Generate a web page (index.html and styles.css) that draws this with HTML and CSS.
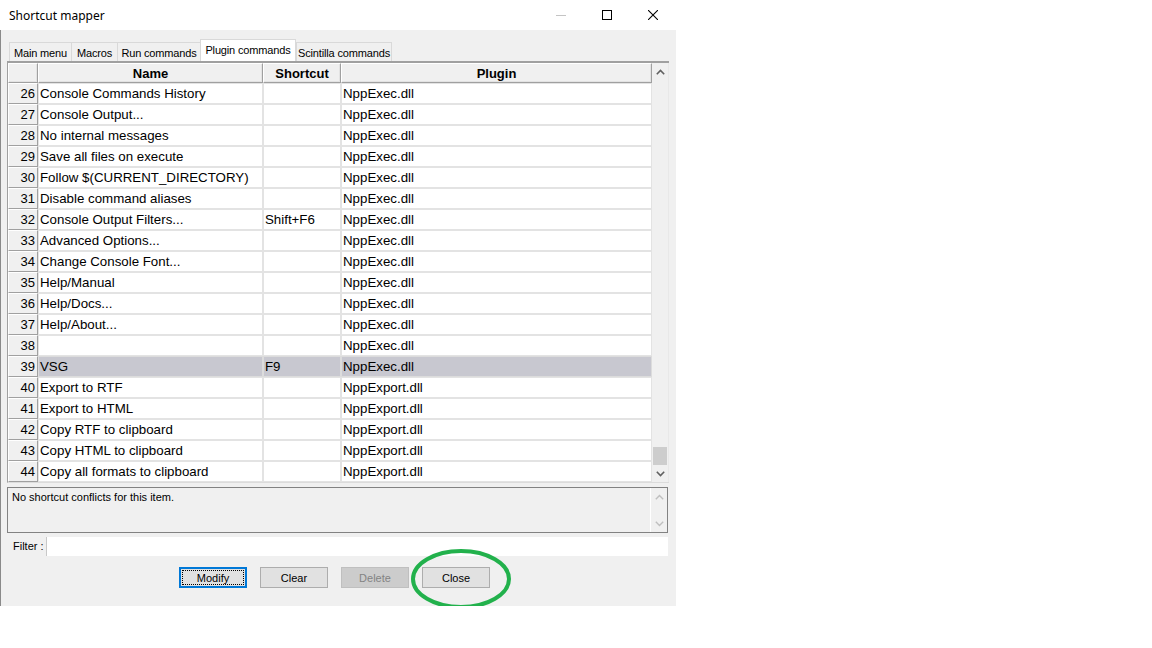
FILE: index.html
```html
<!DOCTYPE html>
<html>
<head>
<meta charset="utf-8">
<title>Shortcut mapper</title>
<link rel="stylesheet" href="styles.css">
</head>
<body>
<div class="window">
  <div class="titlebar">
    <span class="title">Shortcut mapper</span>
    <div class="controls">
      <span class="ctl ctl-min"><svg width="10" height="10" viewBox="0 0 10 10"><line x1="0" y1="5.5" x2="10" y2="5.5" stroke="#c4c4c4" stroke-width="1"/></svg></span>
      <span class="ctl ctl-max"><svg width="10" height="10" viewBox="0 0 10 10"><rect x="0.5" y="0.5" width="9" height="9" fill="none" stroke="#000" stroke-width="1"/></svg></span>
      <span class="ctl ctl-close"><svg width="10" height="10" viewBox="0 0 10 10"><path d="M0 0L10 10M10 0L0 10" stroke="#000" stroke-width="1.1"/></svg></span>
    </div>
  </div>
  <div class="client">
    <div class="tabs">
      <div class="tab t1">Main menu</div>
      <div class="tab t2">Macros</div>
      <div class="tab t3">Run commands</div>
      <div class="tab t4 active">Plugin commands</div>
      <div class="tab t5">Scintilla commands</div>
    </div>
    <div class="grid">
      <div class="grid-main">
        <div class="row head">
          <div class="hc corner"></div>
          <div class="hc">Name</div>
          <div class="hc">Shortcut</div>
          <div class="hc">Plugin</div>
        </div>
        <div class="row"><div class="num">26</div><div class="c">Console Commands History</div><div class="c"></div><div class="c">NppExec.dll</div></div>
        <div class="row"><div class="num">27</div><div class="c">Console Output...</div><div class="c"></div><div class="c">NppExec.dll</div></div>
        <div class="row"><div class="num">28</div><div class="c">No internal messages</div><div class="c"></div><div class="c">NppExec.dll</div></div>
        <div class="row"><div class="num">29</div><div class="c">Save all files on execute</div><div class="c"></div><div class="c">NppExec.dll</div></div>
        <div class="row"><div class="num">30</div><div class="c">Follow $(CURRENT_DIRECTORY)</div><div class="c"></div><div class="c">NppExec.dll</div></div>
        <div class="row"><div class="num">31</div><div class="c">Disable command aliases</div><div class="c"></div><div class="c">NppExec.dll</div></div>
        <div class="row"><div class="num">32</div><div class="c">Console Output Filters...</div><div class="c">Shift+F6</div><div class="c">NppExec.dll</div></div>
        <div class="row"><div class="num">33</div><div class="c">Advanced Options...</div><div class="c"></div><div class="c">NppExec.dll</div></div>
        <div class="row"><div class="num">34</div><div class="c">Change Console Font...</div><div class="c"></div><div class="c">NppExec.dll</div></div>
        <div class="row"><div class="num">35</div><div class="c">Help/Manual</div><div class="c"></div><div class="c">NppExec.dll</div></div>
        <div class="row"><div class="num">36</div><div class="c">Help/Docs...</div><div class="c"></div><div class="c">NppExec.dll</div></div>
        <div class="row"><div class="num">37</div><div class="c">Help/About...</div><div class="c"></div><div class="c">NppExec.dll</div></div>
        <div class="row"><div class="num">38</div><div class="c"></div><div class="c"></div><div class="c">NppExec.dll</div></div>
        <div class="row sel"><div class="num">39</div><div class="c">VSG</div><div class="c">F9</div><div class="c">NppExec.dll</div></div>
        <div class="row"><div class="num">40</div><div class="c">Export to RTF</div><div class="c"></div><div class="c">NppExport.dll</div></div>
        <div class="row"><div class="num">41</div><div class="c">Export to HTML</div><div class="c"></div><div class="c">NppExport.dll</div></div>
        <div class="row"><div class="num">42</div><div class="c">Copy RTF to clipboard</div><div class="c"></div><div class="c">NppExport.dll</div></div>
        <div class="row"><div class="num">43</div><div class="c">Copy HTML to clipboard</div><div class="c"></div><div class="c">NppExport.dll</div></div>
        <div class="row"><div class="num">44</div><div class="c">Copy all formats to clipboard</div><div class="c"></div><div class="c">NppExport.dll</div></div>
      </div>
      <div class="vscroll">
        <div class="arrow"><svg width="9" height="6" viewBox="0 0 9 6"><path d="M0.8 5.2L4.5 1.5L8.2 5.2" fill="none" stroke="#606060" stroke-width="1.6"/></svg></div>
        <div class="track"><div class="thumb"></div></div>
        <div class="arrow"><svg width="9" height="6" viewBox="0 0 9 6"><path d="M0.8 0.8L4.5 4.5L8.2 0.8" fill="none" stroke="#606060" stroke-width="1.6"/></svg></div>
      </div>
    </div>
    <div class="conflicts">
      <div class="conf-text">No shortcut conflicts for this item.</div>
      <div class="vscroll small">
        <div class="arrow"><svg width="9" height="6" viewBox="0 0 9 6"><path d="M0.8 5.2L4.5 1.5L8.2 5.2" fill="none" stroke="#bfbfbf" stroke-width="1.4"/></svg></div>
        <div class="track"></div>
        <div class="arrow"><svg width="9" height="6" viewBox="0 0 9 6"><path d="M0.8 0.8L4.5 4.5L8.2 0.8" fill="none" stroke="#bfbfbf" stroke-width="1.4"/></svg></div>
      </div>
    </div>
    <div class="filter">
      <span class="flabel">Filter :</span>
      <div class="finput"></div>
    </div>
    <div class="buttons">
      <div class="btn focus"><span>Modify</span></div>
      <div class="btn">Clear</div>
      <div class="btn disabled">Delete</div>
      <div class="btn">Close</div>
    </div>
    <svg class="annot" width="106" height="64" viewBox="0 0 106 64"><ellipse cx="53" cy="32" rx="48" ry="28" fill="none" stroke="#22b14c" stroke-width="4"/></svg>
  </div>
</div>
</body>
</html>
```

FILE: styles.css
```css
* { box-sizing: border-box; }
html, body { margin: 0; padding: 0; background: #ffffff; }
body { font-family: "Liberation Sans", Arial, sans-serif; }

.window { width: 676px; height: 606px; display: flex; flex-direction: column; }

.titlebar {
  height: 30px; background: #ffffff; display: flex; align-items: center;
  justify-content: space-between; flex: none;
}
.title { font-family: "Noto Sans", "Open Sans", sans-serif; font-size: 12px; color: #000; padding-left: 9px; }
.controls { display: flex; height: 30px; }
.ctl { width: 46px; height: 30px; display: flex; align-items: center; justify-content: center; }

.client {
  position: relative; flex: 1; background: #f0f0f0;
  border-left: 1px solid #8a8a8a; font-size: 11px;
}

.tabs { display: flex; align-items: flex-end; height: 31px; padding-left: 8px; padding-top: 9px; }
.tab {
  height: 19px; border: 1px solid #d9d9d9; border-bottom: none; border-right: none;
  background: #f0f0f0; display: flex; align-items: center; justify-content: center;
  font-size: 11px; color: #000; padding-top: 1px; white-space: nowrap; letter-spacing: -0.15px;
}
.tab.t1 { width: 62px; }
.tab.t2 { width: 46px; }
.tab.t3 { width: 83px; }
.tab.t4 { width: 96px; }
.tab.t5 { width: 96px; border-right: 1px solid #d9d9d9; }
.tab.active { height: 22px; background: #ffffff; border: 1px solid #d9d9d9; border-bottom: none; padding-bottom: 3px; }

.grid {
  margin-left: 6px; width: 662px; height: 422px; display: flex;
  border-top: 2px solid #a0a0a0; border-left: 1px solid #a0a0a0; border-bottom: 1px solid #dcdcdc;
}
.grid-main { width: 644px; background: #ffffff; }
.row { display: grid; grid-template-columns: 30px 225px 78px 311px; height: 21px; }
.row.head { height: 20px; }
.hc {
  background: #f0f0f0; border: 1px solid #a0a0a0; border-top-color: #ffffff; border-left-color: #ffffff;
  box-shadow: inset -1px -1px 0 #e3e3e3;
  font-weight: bold; font-size: 13px; display: flex; align-items: center; justify-content: center; color: #000;
}
.num {
  background: #f0f0f0; border: 1px solid #a0a0a0; border-top-color: #ffffff; border-left-color: #ffffff;
  font-size: 13px; text-align: right; padding-right: 2px; line-height: 19px; color: #000;
}
.c {
  border: 1px solid #e3e3e3; font-size: 13.3px; line-height: 19px; padding-left: 1px;
  white-space: nowrap; overflow: hidden; color: #000;
}
.row.sel .c { background: #c8c8d0; border-color: #dcdcdc; }

.vscroll { width: 17px; background: #f0f0f0; display: flex; flex-direction: column; border-right: 1px solid #e8e8e8; }
.vscroll .arrow { height: 17px; display: flex; align-items: center; justify-content: center; flex: none; }
.vscroll .track { flex: 1; display: flex; flex-direction: column; justify-content: flex-end; }
.thumb { height: 18px; background: #cdcdcd; margin: 0 1px 0 1px; }

.conflicts {
  margin: 4px 0 0 6px; width: 661px; height: 46px; border: 1px solid #828282;
  display: flex; background: #f0f0f0;
}
.conf-text { flex: 1; padding: 3px 0 0 4px; font-size: 11px; color: #000; }
.vscroll.small { border-right: none; border-left: 1px solid #ffffff; }

.filter { display: flex; align-items: center; margin-top: 4px; height: 19px; }
.flabel { width: 45px; padding-left: 12px; font-size: 11px; color: #000; padding-bottom: 1px; }
.finput { width: 622px; height: 19px; background: #ffffff; border-left: 1px solid #c8c8c8; }

.buttons { display: flex; gap: 13px; margin-top: 11px; padding-left: 178px; }
.btn {
  width: 68px; height: 21px; background: #e1e1e1; border: 1px solid #adadad;
  display: flex; align-items: center; justify-content: center; font-size: 11px; color: #000;
}
.btn.focus { border: 1px solid #0078d7; box-shadow: inset 0 0 0 1px #0078d7; padding: 2px; }
.btn.focus span {
  flex: 1; align-self: stretch; border: 1px dotted #000;
  display: flex; align-items: center; justify-content: center;
}
.btn.disabled { background: #cccccc; border-color: #bfbfbf; color: #838383; }

.annot { position: absolute; left: 407px; top: 517px; }
```
